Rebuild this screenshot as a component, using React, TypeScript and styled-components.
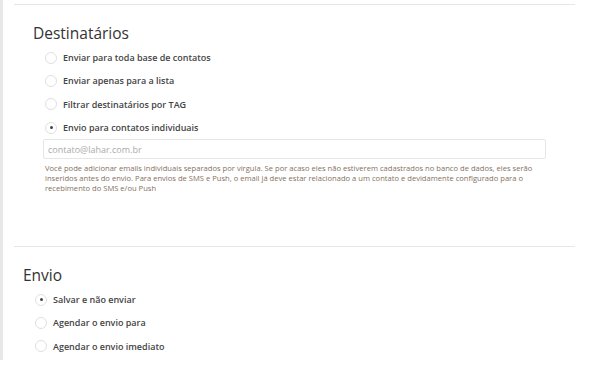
import React from "react";
import styled, { createGlobalStyle } from "styled-components";

const GlobalStyle = createGlobalStyle`
  body {
    margin: 0;
    background: #fff;
    font-family: "Open Sans", "Noto Sans", sans-serif;
  }
`;

const destinos = [
  { label: "Enviar para toda base de contatos", checked: false },
  { label: "Enviar apenas para a lista", checked: false },
  { label: "Filtrar destinatários por TAG", checked: false },
  { label: "Envio para contatos individuais", checked: true },
];

const envios = [
  { label: "Salvar e não enviar", checked: true },
  { label: "Agendar o envio para", checked: false },
  { label: "Agendar o envio imediato", checked: false },
];

const App = () => {
  return (
    <>
      <GlobalStyle />
      <Panel>
        <Section>
          <Inner $indent={19} $top={18}>
            <Title>Destinatários</Title>
            <Options>
              {destinos.map((d) => (
                <Option key={d.label}>
                  <Radio $checked={d.checked} />
                  <Label>{d.label}</Label>
                </Option>
              ))}
            </Options>
            <Input placeholder="contato@lahar.com.br" />
            <Help>
              Você pode adicionar emails individuais separados por vírgula. Se por acaso eles não estiverem cadastrados no banco de dados, eles serão inseridos antes do envio. Para envios de SMS e Push, o email já deve estar relacionado a um contato e devidamente configurado para o recebimento do SMS e/ou Push
            </Help>
          </Inner>
        </Section>
        <Section>
          <Inner $indent={9} $top={18}>
            <Title>Envio</Title>
            <Options>
              {envios.map((d) => (
                <Option key={d.label}>
                  <Radio $checked={d.checked} />
                  <Label>{d.label}</Label>
                </Option>
              ))}
            </Options>
          </Inner>
        </Section>
      </Panel>
    </>
  );
};

export default App;

const Panel = styled.div`
  height: 360px;
  width: 587px;
  border-left: 3px solid #e8e8e8;
  padding-top: 4px;
  box-sizing: border-box;
  display: flex;
  flex-direction: column;
`;

const Section = styled.div`
  margin-left: 11px;
  width: 561px;
  border-top: 1px solid #e6e6e6;
  &:first-child {
    height: 241px;
  }
`;

const Inner = styled.div<{ $indent: number; $top: number }>`
  padding-left: ${(p) => p.$indent}px;
  padding-right: 29px;
  padding-top: ${(p) => p.$top}px;
`;

const Title = styled.div`
  font-size: 15.5px;
  line-height: 20px;
  color: #333;
  margin-bottom: 3px;
`;

const Options = styled.div`
  display: flex;
  flex-direction: column;
  padding-left: 12px;
`;

const Option = styled.div`
  height: 23.3px;
  display: flex;
  align-items: center;
  gap: 6px;
`;

const Radio = styled.span<{ $checked: boolean }>`
  width: 12px;
  height: 12px;
  border-radius: 50%;
  border: 1px solid #e0e0e0;
  box-sizing: border-box;
  display: flex;
  align-items: center;
  justify-content: center;
  &::after {
    content: "";
    width: 3px;
    height: 3px;
    border-radius: 50%;
    background: ${(p) => (p.$checked ? "#444" : "transparent")};
  }
`;

const Label = styled.span`
  font-size: 9px;
  font-weight: 600;
  color: #444;
`;

const Input = styled.input`
  display: block;
  margin-left: 10px;
  width: 503px;
  height: 20px;
  box-sizing: border-box;
  border: 1px solid #e6e6e6;
  border-radius: 2px;
  padding: 0 4px;
  font-family: inherit;
  font-size: 9px;
  outline: none;
  &::placeholder {
    color: #aaa;
  }
`;

const Help = styled.p`
  margin: 4px 0 0 12px;
  font-size: 7.6px;
  line-height: 10px;
  color: #857060;
`;
